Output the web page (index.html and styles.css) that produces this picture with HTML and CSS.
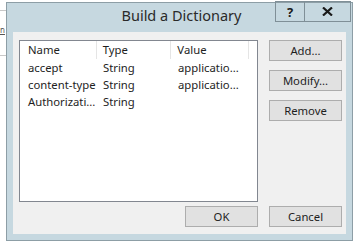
FILE: index.html
```html
<!DOCTYPE html>
<html>
<head>
<meta charset="utf-8">
<link rel="stylesheet" href="styles.css">
</head>
<body>
<div class="desktop">
  <div class="behind">
    <span class="behind-line l1"></span>
    <span class="behind-text">n</span>
    <span class="behind-line l2"></span>
  </div>
  <div class="dialog">
    <div class="titlebar">
      <div class="spacer"></div>
      <div class="title">Build a Dictionary</div>
      <div class="caption-buttons">
        <div class="cap help">?</div>
        <div class="cap close">
          <svg width="11" height="9" viewBox="0 0 11 9"><path d="M1 0.5 L10 8.5 M10 0.5 L1 8.5" stroke="#1a1a1a" stroke-width="2.2"/></svg>
        </div>
      </div>
    </div>
    <div class="client">
      <div class="listview">
        <div class="row header">
          <div class="cell c1">Name</div>
          <div class="cell c2">Type</div>
          <div class="cell c3">Value</div>
          <div class="cell c4"></div>
        </div>
        <div class="row">
          <div class="cell c1">accept</div>
          <div class="cell c2">String</div>
          <div class="cell c3">applicatio...</div>
        </div>
        <div class="row">
          <div class="cell c1">content-type</div>
          <div class="cell c2">String</div>
          <div class="cell c3">applicatio...</div>
        </div>
        <div class="row">
          <div class="cell c1">Authorizati...</div>
          <div class="cell c2">String</div>
          <div class="cell c3"></div>
        </div>
      </div>
      <div class="side-buttons">
        <button class="btn">Add...</button>
        <button class="btn">Modify...</button>
        <button class="btn">Remove</button>
      </div>
      <div class="ok-wrap"><button class="btn">OK</button></div>
      <div><button class="btn">Cancel</button></div>
    </div>
  </div>
</div>
</body>
</html>
```

FILE: styles.css
```css
* { box-sizing: border-box; }
html, body { margin: 0; padding: 0; background: #ffffff; }
body {
  width: 363px;
  height: 242px;
  overflow: hidden;
  font-family: "Noto Sans", "Open Sans", sans-serif;
  font-size: 11.3px;
  color: #1e1e1e;
}
.desktop {
  display: flex;
  height: 242px;
}
.behind {
  width: 6px;
  display: flex;
  flex-direction: column;
}
.behind-line {
  display: block;
  height: 1px;
  background: #c8c8c8;
  width: 6px;
}
.l1 { margin-top: 10px; }
.behind-text {
  margin-top: 14px;
  font-size: 8px;
  line-height: 10px;
  height: 10px;
  color: #555;
  text-decoration: underline;
}
.l2 { margin-top: 20px; }
.dialog {
  margin-top: 2px;
  width: 347px;
  height: 239px;
  border: 1px solid #8d9ea6;
  background: #c6d8e0;
  display: flex;
  flex-direction: column;
}
.titlebar {
  height: 29px;
  display: grid;
  grid-template-columns: 1fr auto 1fr;
  align-items: start;
}
.title {
  font-size: 14.5px;
  color: #2a2a2a;
  padding-top: 2px;
  line-height: 20px;
  padding-left: 4px;
}
.caption-buttons {
  justify-self: end;
  display: flex;
  margin-top: -2px;
  margin-right: 1px;
}
.cap {
  height: 21px;
  border: 1px solid #7f8f97;
  display: flex;
  align-items: center;
  justify-content: center;
  font-weight: bold;
  font-size: 13px;
  color: #1a1a1a;
}
.help { width: 29px; border-right: none; }
.close { width: 47px; }
.client {
  margin: 0 6px 0 6px;
  flex: 1;
  margin-bottom: 6px;
  background: #f0f0f0;
  padding: 8px 6px 0 6px;
  display: grid;
  grid-template-columns: 239px 73px;
  grid-template-rows: 162px 21px;
  column-gap: 11px;
  row-gap: 4px;
}
.listview {
  background: #fff;
  border: 1px solid #828790;
}
.row {
  display: flex;
  height: 17px;
  align-items: center;
}
.row.header { height: 18px; }
.cell {
  white-space: nowrap;
  overflow: hidden;
  line-height: 17px;
  padding-left: 8px;
}
.c1 { width: 77px; }
.c2 { width: 75px; padding-left: 6px; }
.c3 { width: 78px; padding-left: 6px; }
.header .cell { border-right: 1px solid #e5e5e5; height: 18px; }
.header .c4 { border-right: none; flex: 1; }
.side-buttons {
  display: flex;
  flex-direction: column;
  gap: 9px;
}
.btn {
  width: 73px;
  height: 21px;
  background: #e1e1e1;
  border: 1px solid #adadad;
  font-family: "Noto Sans", "Open Sans", sans-serif;
  font-size: 11.3px;
  color: #1e1e1e;
  padding: 0;
  line-height: 19px;
}
.ok-wrap { display: flex; justify-content: flex-end; }
```
